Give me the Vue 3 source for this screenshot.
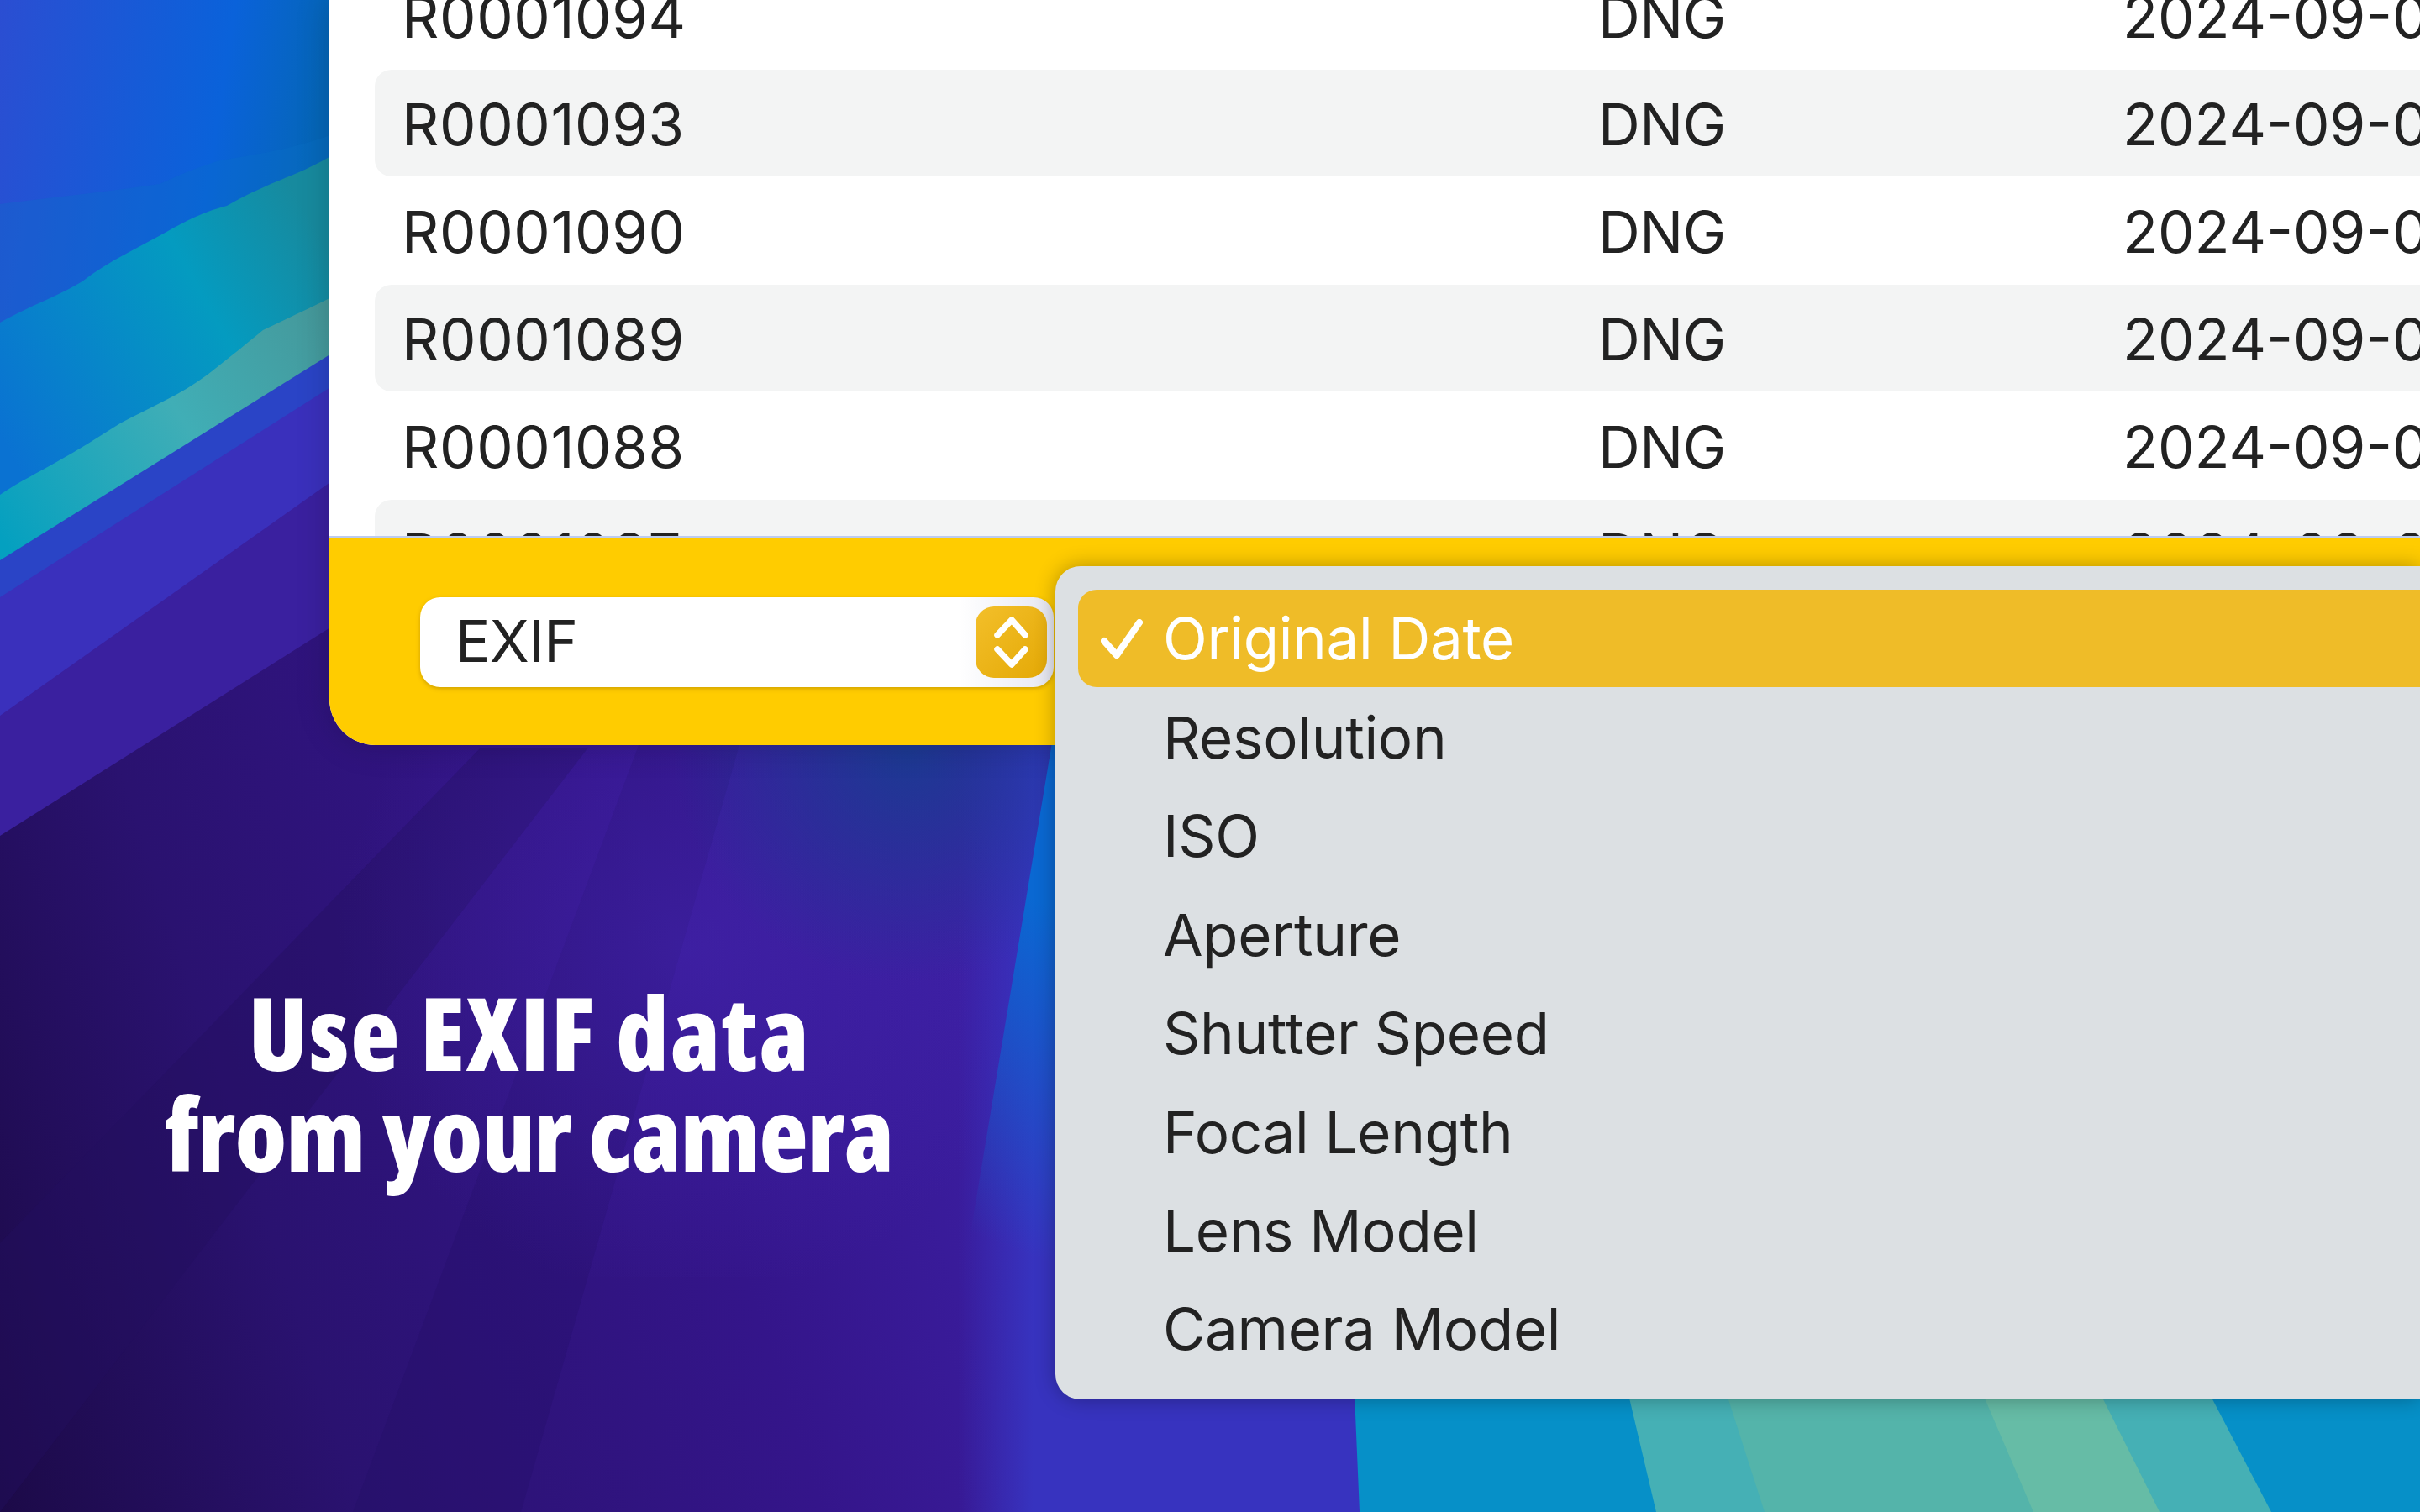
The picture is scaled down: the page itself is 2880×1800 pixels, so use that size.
<script setup>
const files = [
  { name: 'R0001094', alt: false },
  { name: 'R0001093', alt: true },
  { name: 'R0001090', alt: false },
  { name: 'R0001089', alt: true },
  { name: 'R0001088', alt: false },
  { name: 'R0001087', alt: true },
];

const exifFields = [
  'Original Date',
  'Resolution',
  'ISO',
  'Aperture',
  'Shutter Speed',
  'Focal Length',
  'Lens Model',
  'Camera Model',
];
</script>

<template>
  <div class="screen">
    <svg class="wallpaper" viewBox="0 0 2880 1800" preserveAspectRatio="none" aria-hidden="true">
      <defs>
        <linearGradient id="sky" gradientUnits="userSpaceOnUse" x1="0" y1="0" x2="392" y2="60">
          <stop offset="0" stop-color="#2b4ed2" />
          <stop offset="0.7" stop-color="#0a62da" />
          <stop offset="1" stop-color="#0566b8" />
        </linearGradient>
        <linearGradient id="teal" gradientUnits="userSpaceOnUse" x1="0" y1="520" x2="392" y2="300">
          <stop offset="0" stop-color="#0a72d2" />
          <stop offset="0.65" stop-color="#049bc0" />
          <stop offset="1" stop-color="#178a9e" />
        </linearGradient>
        <linearGradient id="pale" gradientUnits="userSpaceOnUse" x1="0" y1="640" x2="392" y2="380">
          <stop offset="0" stop-color="#04a0c0" />
          <stop offset="0.55" stop-color="#40aeb6" />
          <stop offset="1" stop-color="#45989a" />
        </linearGradient>
        <linearGradient id="dusk" gradientUnits="userSpaceOnUse" x1="0" y1="1800" x2="1300" y2="1380">
          <stop offset="0" stop-color="#1c0a48" />
          <stop offset="0.3" stop-color="#2a1270" />
          <stop offset="0.68" stop-color="#34158a" />
          <stop offset="1" stop-color="#3d20a6" />
        </linearGradient>
        <linearGradient id="violet" gradientUnits="userSpaceOnUse" x1="1140" y1="0" x2="1230" y2="0">
          <stop offset="0" stop-color="#3733bf" stop-opacity="0" />
          <stop offset="1" stop-color="#3733bf" />
        </linearGradient>
        <linearGradient id="streak" gradientUnits="userSpaceOnUse" x1="1110" y1="1450" x2="1256" y2="1080">
          <stop offset="0" stop-color="#0a68d2" stop-opacity="0" />
          <stop offset="1" stop-color="#0a68d2" />
        </linearGradient>
        <radialGradient id="glow" gradientUnits="userSpaceOnUse" cx="820" cy="1130" r="420">
          <stop offset="0" stop-color="#4a2cc0" stop-opacity="0.4" />
          <stop offset="1" stop-color="#4a2cc0" stop-opacity="0" />
        </radialGradient>
        <radialGradient id="haze" gradientUnits="userSpaceOnUse" cx="1080" cy="890" r="280">
          <stop offset="0" stop-color="#14408e" stop-opacity="0.8" />
          <stop offset="1" stop-color="#14408e" stop-opacity="0" />
        </radialGradient>
      </defs>

      <rect width="2880" height="1800" fill="url(#sky)" />
      <path d="M0 243C60 235 130 228 190 219C220 205 240 198 258 192C310 182 350 180 420 150V500H0Z" fill="#0a70c8" opacity="0.3" />
      <path d="M0 384C40 362 70 352 98 335C130 310 165 295 200 275C230 258 250 250 270 245C300 228 320 220 344 210C370 200 395 185 420 172V760H0Z" fill="url(#teal)" />
      <path d="M0 589C25 572 45 563 69 549C95 535 120 518 143 504C180 484 215 470 247 446C270 428 295 408 313 393C350 375 385 360 420 340V760H0Z" fill="url(#pale)" />
      <path d="M0 667L420 405V1800H0Z" fill="#2a44c6" />
      <path d="M0 711L420 444V1800H0Z" fill="#3a30bc" />
      <path d="M0 852L420 555V1800H0Z" fill="#3a209f" />
      <path d="M0 995L420 730H1400V1800H0Z" fill="url(#dusk)" />
      <path d="M0 1480L572 890H700L0 1800Z" fill="#24105e" opacity="0.4" />
      <path d="M420 1800L760 887H880L620 1800Z" fill="#1f0f60" opacity="0.22" />
      <rect x="400" y="720" width="860" height="800" fill="url(#glow)" />
      <rect x="1140" y="720" width="480" height="1080" fill="url(#violet)" />
      <rect x="800" y="700" width="500" height="480" fill="url(#haze)" />
      <path d="M1256 860H1300V1800H1100Z" fill="url(#streak)" />
      <path d="M1612 1660H2880V1800H1618Z" fill="#0690c8" />
      <path d="M1938 1660H2630L2703 1800H1971Z" fill="#45b0b5" />
      <path d="M2055 1660H2500L2570 1800H2100Z" fill="#54b4aa" />
      <path d="M2360 1660H2500L2570 1800H2420Z" fill="#66bca6" />
    </svg>

    <div class="window">
      <div class="rows">
        <div v-for="file in files" :key="file.name" class="row" :class="{ alt: file.alt }">
          <span class="cell-name">{{ file.name }}</span>
          <span class="cell-kind">DNG</span>
          <span class="cell-date">2024-09-07</span>
        </div>
      </div>
      <div class="footer">
        <div class="select">
          <span class="select-label">EXIF</span>
          <div class="stepper">
            <svg viewBox="0 0 85 85" width="85" height="85" fill="none" stroke="#fff" stroke-width="7.5" stroke-linecap="round" stroke-linejoin="round">
              <path d="M26 34L43 16L59 34" />
              <path d="M26 51L43 69L59 51" />
            </svg>
          </div>
        </div>
        <div class="menu">
          <div v-for="(field, i) in exifFields" :key="field" class="menu-item" :class="{ active: i === 0 }">
            <svg v-if="i === 0" class="check" viewBox="0 0 50 47" width="50" height="47" fill="none" stroke="#fff" stroke-width="8" stroke-linecap="round" stroke-linejoin="round">
              <path d="M4 26L19 43L46 4" />
            </svg>
            <span>{{ field }}</span>
          </div>
        </div>
      </div>
    </div>

    <h1 class="caption">
      <span class="caption-top">Use EXIF data</span>
      <span class="caption-bottom">from your camera</span>
    </h1>
  </div>
</template>

<style>
html, body {
  margin: 0;
  background: #1c0a48;
}
</style>

<style scoped>
.screen {
  position: relative;
  width: 2880px;
  height: 1800px;
  overflow: hidden;
  font-family: Inter, "Noto Sans", sans-serif;
}

.wallpaper {
  position: absolute;
  inset: 0;
  width: 100%;
  height: 100%;
}

.window {
  position: relative;
  margin-left: 392px;
  height: 887px;
  display: flex;
  flex-direction: column;
  background: #fff;
  border-bottom-left-radius: 55px;
  box-shadow: 0 0 40px rgba(0, 0, 0, 0.18);
}

.rows {
  height: 638px;
  padding-left: 54px;
  overflow: hidden;
  flex: none;
}

.row {
  display: flex;
  align-items: center;
  height: 127px;
  margin-bottom: 1px;
  padding: 3px 0 0 32px;
  box-sizing: border-box;
  font-size: 69px;
  color: #222;
  border-radius: 20px 0 0 20px;
}

.row:first-child {
  margin-top: -45px;
}

.row.alt {
  background: #f3f4f4;
}

.cell-name {
  width: 1424px;
  flex: none;
  letter-spacing: 0.6px;
}

.cell-kind {
  width: 624px;
  flex: none;
  letter-spacing: -0.5px;
}

.cell-date {
  white-space: nowrap;
}

.footer {
  position: relative;
  flex: 1;
  padding: 71px 0 0 108px;
  background: #ffcc00;
  border-top: 2px solid #bccbf0;
  border-bottom-left-radius: 55px;
}

.select {
  display: flex;
  align-items: center;
  justify-content: space-between;
  box-sizing: border-box;
  width: 754px;
  height: 107px;
  padding: 0 8px 0 42px;
  font-size: 69px;
  color: #222;
  background: linear-gradient(90deg, #fff 85%, #e6e7f1 100%);
  border-radius: 24px;
  box-shadow: 0 2px 5px rgba(120, 80, 0, 0.35);
}

.select-label {
  letter-spacing: -0.6px;
  margin-top: -3px;
}

.stepper {
  width: 85px;
  height: 85px;
  background: linear-gradient(135deg, #f3bf2a, #e4a906);
  border-radius: 22px;
}

.stepper svg {
  display: block;
}

.menu {
  position: absolute;
  top: 34px;
  left: 864px;
  right: 0;
  box-sizing: border-box;
  height: 992px;
  padding: 28px 0 25px 27px;
  background: #dce0e3;
  border-radius: 30px 0 0 30px;
  box-shadow: 0 0 24px rgba(0, 0, 0, 0.3);
}

.menu-item {
  position: relative;
  display: flex;
  align-items: center;
  height: 117.4px;
  padding-left: 101px;
  font-size: 69px;
  letter-spacing: -0.3px;
  color: #222;
}

.menu-item.active {
  height: 116px;
  margin-bottom: 1.4px;
  color: #fff;
  background: #efbc28;
  border-radius: 22px 0 0 22px;
}

.check {
  position: absolute;
  left: 27px;
  top: 35px;
}

.caption {
  position: relative;
  width: 1260px;
  margin: 282px 0 0;
  text-align: center;
  font-family: "Open Sans", sans-serif;
  font-stretch: 78%;
  font-size: 120px;
  line-height: 120px;
  font-weight: 800;
  color: #fff;
}

.caption-top,
.caption-bottom {
  display: block;
}

.caption-top {
  letter-spacing: 1.9px;
}

.caption-bottom {
  letter-spacing: -0.9px;
}
</style>
